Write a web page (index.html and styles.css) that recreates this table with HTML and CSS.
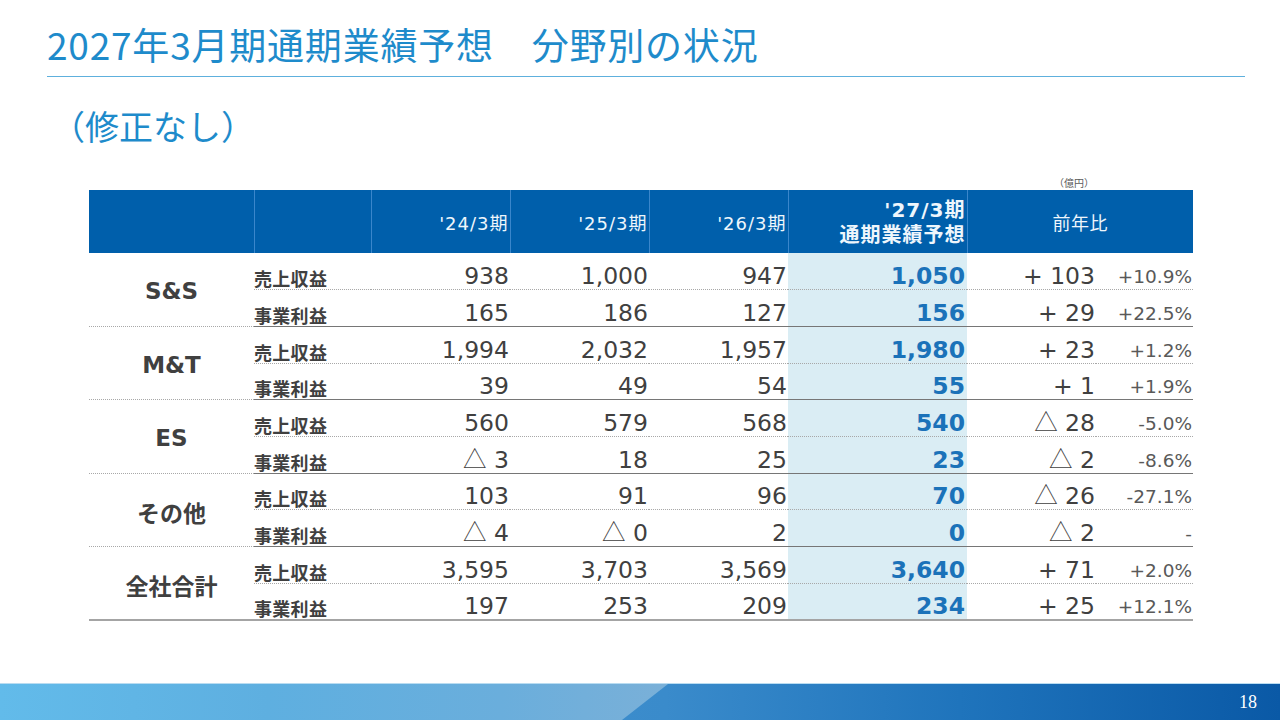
FILE: index.html
```html
<!DOCTYPE html>
<html lang="ja">
<head>
<meta charset="utf-8">
<title>2027年3月期通期業績予想 分野別の状況</title>
<link rel="stylesheet" href="styles.css">
</head>
<body>
<div class="slide">
  <header class="title-bar">
    <h1 class="title">2027年3月期通期業績予想　分野別の状況</h1>
  </header>
  <p class="subtitle">（修正なし）</p>
  <div class="table-wrap">
    <div class="unit-row"><span class="unit">（億円）</span></div>
    <table class="perf">
      <colgroup>
        <col class="c-seg"><col class="c-label"><col class="c-year"><col class="c-year"><col class="c-year"><col class="c-plan"><col class="c-diff"><col class="c-pct">
      </colgroup>
      <thead>
        <tr>
          <th class="h-blank first"></th>
          <th class="h-blank"></th>
          <th class="h-year">'24/3期</th>
          <th class="h-year">'25/3期</th>
          <th class="h-year">'26/3期</th>
          <th class="h-plan">'27/3期<br>通期業績予想</th>
          <th class="h-yoy" colspan="2">前年比</th>
        </tr>
      </thead>
      <tbody>
        <tr class="sales">
          <td class="seg" rowspan="2">S&amp;S</td>
          <td class="label">売上収益</td>
          <td class="num">938</td><td class="num">1,000</td><td class="num">947</td>
          <td class="plan">1,050</td><td class="diff">+ 103</td><td class="pct">+10.9%</td>
        </tr>
        <tr class="profit">
          <td class="label">事業利益</td>
          <td class="num">165</td><td class="num">186</td><td class="num">127</td>
          <td class="plan">156</td><td class="diff">+ 29</td><td class="pct">+22.5%</td>
        </tr>
        <tr class="sales">
          <td class="seg" rowspan="2">M&amp;T</td>
          <td class="label">売上収益</td>
          <td class="num">1,994</td><td class="num">2,032</td><td class="num">1,957</td>
          <td class="plan">1,980</td><td class="diff">+ 23</td><td class="pct">+1.2%</td>
        </tr>
        <tr class="profit">
          <td class="label">事業利益</td>
          <td class="num">39</td><td class="num">49</td><td class="num">54</td>
          <td class="plan">55</td><td class="diff">+ 1</td><td class="pct">+1.9%</td>
        </tr>
        <tr class="sales">
          <td class="seg" rowspan="2">ES</td>
          <td class="label">売上収益</td>
          <td class="num">560</td><td class="num">579</td><td class="num">568</td>
          <td class="plan">540</td><td class="diff"><span class="tri">△</span> 28</td><td class="pct">-5.0%</td>
        </tr>
        <tr class="profit">
          <td class="label">事業利益</td>
          <td class="num"><span class="tri">△</span> 3</td><td class="num">18</td><td class="num">25</td>
          <td class="plan">23</td><td class="diff"><span class="tri">△</span> 2</td><td class="pct">-8.6%</td>
        </tr>
        <tr class="sales">
          <td class="seg" rowspan="2">その他</td>
          <td class="label">売上収益</td>
          <td class="num">103</td><td class="num">91</td><td class="num">96</td>
          <td class="plan">70</td><td class="diff"><span class="tri">△</span> 26</td><td class="pct">-27.1%</td>
        </tr>
        <tr class="profit">
          <td class="label">事業利益</td>
          <td class="num"><span class="tri">△</span> 4</td><td class="num"><span class="tri">△</span> 0</td><td class="num">2</td>
          <td class="plan">0</td><td class="diff"><span class="tri">△</span> 2</td><td class="pct">-</td>
        </tr>
        <tr class="sales">
          <td class="seg last" rowspan="2">全社合計</td>
          <td class="label">売上収益</td>
          <td class="num">3,595</td><td class="num">3,703</td><td class="num">3,569</td>
          <td class="plan">3,640</td><td class="diff">+ 71</td><td class="pct">+2.0%</td>
        </tr>
        <tr class="profit last">
          <td class="label">事業利益</td>
          <td class="num">197</td><td class="num">253</td><td class="num">209</td>
          <td class="plan">234</td><td class="diff">+ 25</td><td class="pct">+12.1%</td>
        </tr>
      </tbody>
    </table>
  </div>
  <footer class="footer">
    <span class="page">18</span>
  </footer>
</div>
</body>
</html>
```

FILE: styles.css
```css
* { box-sizing: border-box; }

html, body {
  margin: 0;
  padding: 0;
  background: #ffffff;
}

body {
  font-family: "Noto Sans CJK JP", "DejaVu Sans", sans-serif;
  color: #404040;
}

.slide {
  width: 1280px;
  height: 720px;
  display: flex;
  flex-direction: column;
  overflow: hidden;
}

/* ---------- title ---------- */
.title-bar {
  margin: 0 35px 0 47px;
  padding: 22px 0 10px 0;
  border-bottom: 1px solid #5eb0dd;
}

.title {
  margin: 0;
  font-size: 37px;
  line-height: 44px;
  font-weight: 400;
  color: #1e8bcb;
  white-space: nowrap;
  letter-spacing: 0.8px;
}

.subtitle {
  margin: 29px 0 0 51px;
  font-size: 34px;
  line-height: 40px;
  font-weight: 400;
  color: #1e8bcb;
}

/* ---------- table ---------- */
.table-wrap {
  margin: 30px 0 0 89px;
  width: 1104px;
}

.unit-row {
  display: flex;
  justify-content: flex-end;
  padding-right: 99px;
  height: 14px;
}

.unit {
  font-size: 10px;
  line-height: 14px;
  color: #595959;
}

.perf {
  width: 1104px;
  table-layout: fixed;
  border-collapse: collapse;
  border-spacing: 0;
}

.c-seg { width: 165px; }
.c-label { width: 117px; }
.c-year { width: 139px; }
.c-plan { width: 179px; }
.c-diff { width: 129px; }
.c-pct { width: 97px; }

.perf thead tr { height: 63px; }

.perf th {
  background: #005fab;
  color: #eef6fc;
  font-family: "DejaVu Sans", "Noto Sans CJK JP", sans-serif;
  font-weight: 400;
  font-size: 18px;
  letter-spacing: 1px;
  padding: 0 1px 0 0;
  border-left: 1px solid #3a86cb;
  vertical-align: middle;
}

.perf th.first { border-left: none; }

.h-year { text-align: right; }

.perf th.h-plan {
  text-align: right;
  font-weight: 700;
  font-size: 20px;
  line-height: 25px;
  letter-spacing: 1px;
  padding-right: 1px;
  padding-top: 2px;
}

.perf th.h-yoy {
  text-align: center;
  font-family: "Noto Sans CJK JP", sans-serif;
  font-size: 18px;
  letter-spacing: 0.5px;
  padding-right: 0;
}

.perf tbody tr { height: 36.7px; }

.perf td {
  padding: 0 1px 1px 0;
  vertical-align: bottom;
  white-space: nowrap;
}

.perf tr.sales td { border-bottom: 1px dotted #a8a8a8; }
.perf tr.profit td,
.perf td.seg { border-bottom: 1px solid #767676; }
.perf tr.profit.last td,
.perf td.seg.last { border-bottom: 2px solid #a4a4a4; }

.seg {
  text-align: center;
  vertical-align: middle !important;
  font-family: "DejaVu Sans", "Noto Sans CJK JP", sans-serif;
  font-weight: 700;
  font-size: 23px;
  color: #404040;
  padding: 4px 0 0 0 !important;
}

.label {
  font-weight: 700;
  font-size: 18px;
  line-height: 18px;
  color: #404040;
  padding: 0 0 2px 0 !important;
  letter-spacing: 0.3px;
}

.num, .diff, .plan, .pct {
  text-align: right;
  font-family: "DejaVu Sans", "Noto Sans CJK JP", sans-serif;
  line-height: 24px;
}

.num, .diff {
  font-size: 23.5px;
  color: #404040;
}

.tri {
  font-family: "Noto Sans CJK JP", sans-serif;
  font-weight: 300;
}

.plan {
  background: #daedf4;
  font-size: 23.5px;
  font-weight: 700;
  color: #1b72b9;
  padding-right: 2px !important;
}

.pct {
  font-size: 18.5px;
  color: #595959;
  padding-bottom: 0 !important;
}

/* ---------- footer ---------- */
.footer {
  margin-top: auto;
  height: 37px;
  position: relative;
  border-top: 1px solid #b9dcf1;
  background: linear-gradient(90deg, #4b9bd5 0%, #3a8bcb 52%, #1f74bc 75%, #0a59a6 100%);
  display: flex;
  align-items: center;
  justify-content: flex-end;
  padding-right: 23px;
}

.footer::before {
  content: "";
  position: absolute;
  left: 0;
  top: 0;
  bottom: 0;
  width: 668px;
  background: linear-gradient(90deg, #62bbea 0%, #5eafe0 40%, #6aaedc 75%, #7ab0d8 100%);
  clip-path: polygon(0 0, 668px 0, 622px 100%, 0 100%);
}

.page {
  position: relative;
  color: #ffffff;
  font-family: "Liberation Serif", serif;
  font-size: 18px;
  line-height: 20px;
}
```
